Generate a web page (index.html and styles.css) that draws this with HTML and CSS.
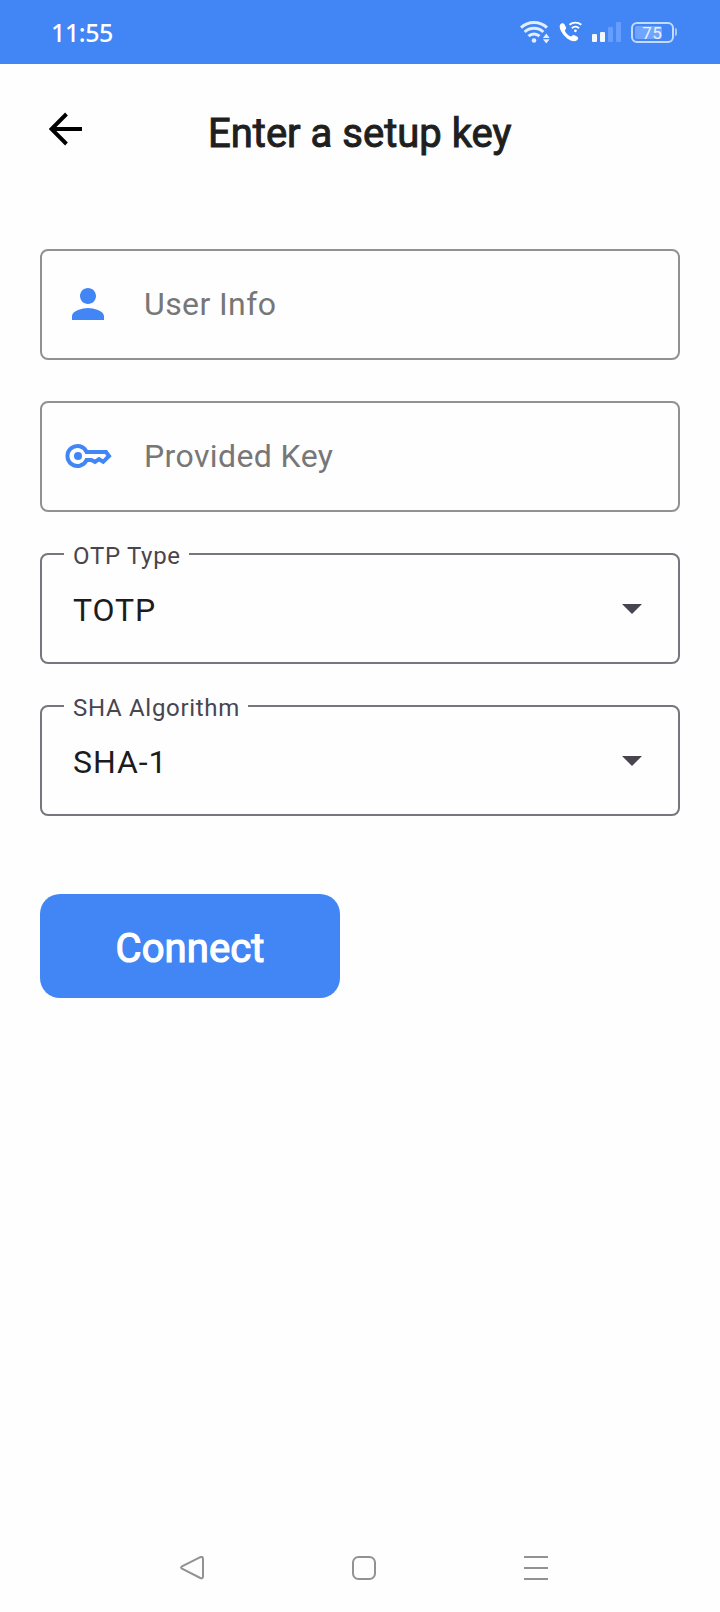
FILE: index.html
```html
<!DOCTYPE html>
<html lang="en">
<head>
<meta charset="utf-8">
<title>Enter a setup key</title>
<link rel="stylesheet" href="styles.css">
</head>
<body>
<div class="screen">
  <header class="status">
    <span class="clock">11:55</span>
    <div class="status-icons">
      <svg class="wifi" width="30" height="24" viewBox="0 0 30 24">
        <g fill="none" stroke="#e2edff" stroke-width="3">
          <path d="M1 7.6A19 19 0 0 1 27 7.6"/>
          <path d="M4.7 12A13.5 13.5 0 0 1 23.3 12"/>
          <path d="M8.5 16.2A8 8 0 0 1 19.5 16.2"/>
        </g>
        <circle cx="14" cy="20.5" r="2.3" fill="#e2edff"/>
        <path d="M26.3 13.5L29.7 18H22.9zM26.3 23.5L29.7 19.2H22.9z" fill="#e2edff"/>
      </svg>
      <svg class="call" width="24" height="22" viewBox="0 0 24 22">
        <path d="M1.2 3.5C2.5 1.8 4.4 1.8 5.2 3L7 6.3C7.6 7.6 6 8.6 5.8 9.5C6.5 12 9 14.6 11.8 15.5C12.9 15.2 13.6 13.6 15 14L18.4 15.8C19.7 16.6 19.4 18.2 18 19.3C15.6 21.2 11.4 20 8.2 17.5C3.4 13.6-.8 7 1.2 3.5Z" fill="#fff"/>
        <g fill="none" stroke="#fff" stroke-width="1.9"><path d="M10.5 3.8A9 9 0 0 1 22.3 3.8M12.9 7.2A5.2 5.2 0 0 1 20 7.2"/></g>
        <circle cx="16.4" cy="9.8" r="1.4" fill="#fff"/>
      </svg>
      <svg class="signal" width="30" height="20" viewBox="0 0 30 20">
        <rect x="0" y="12" width="5" height="8" rx="1" fill="#f3f8ff"/>
        <rect x="8" y="10" width="5" height="10" rx="1" fill="#f3f8ff"/>
        <rect x="16" y="5" width="5" height="15" rx="1" fill="#659eff"/>
        <rect x="24" y="0" width="5" height="20" rx="1" fill="#659eff"/>
      </svg>
      <div class="battery"><span class="charge">75</span></div>
      <span class="battery-tip"></span>
    </div>
  </header>
  <div class="appbar">
    <svg class="back" width="34" height="34" viewBox="0 0 34 34"><path d="M33 17H3M17.5 2L2.5 17L17.5 32" fill="none" stroke="#000" stroke-width="3.9"/></svg>
    <h1 class="title">Enter a setup key</h1>
  </div>
  <main class="form">
    <div class="field">
      <span class="lead"><svg width="48" height="48" viewBox="0 0 24 24"><path fill="#4285f4" d="M12 12c2.21 0 4-1.79 4-4s-1.79-4-4-4-4 1.79-4 4 1.79 4 4 4zm0 2c-2.67 0-8 1.34-8 4v2h16v-2c0-2.66-5.33-4-8-4z"/></svg></span>
      <span class="hint">User Info</span>
    </div>
    <div class="field">
      <span class="lead"><svg width="48" height="48" viewBox="0 0 48 48">
        <path d="M22.6 20H42L45 24L39.2 29.8L35 27.2L31 30L27.4 28H22.6A10 10 0 1 1 22.6 20Z" fill="none" stroke="#4285f4" stroke-width="4"/>
        <circle cx="14" cy="24" r="4" fill="#4285f4"/></svg></span>
      <span class="hint key-hint">Provided Key</span>
    </div>
    <div class="field select">
      <span class="label">OTP Type</span>
      <span class="value">TOTP</span>
      <svg class="caret" width="20" height="10" viewBox="0 0 20 10"><path d="M0 0H20L10 10Z" fill="#49454f"/></svg>
    </div>
    <div class="field select">
      <span class="label">SHA Algorithm</span>
      <span class="value">SHA-1</span>
      <svg class="caret" width="20" height="10" viewBox="0 0 20 10"><path d="M0 0H20L10 10Z" fill="#49454f"/></svg>
    </div>
    <button class="connect">Connect</button>
  </main>
  <nav class="navbar">
    <svg width="24" height="24" viewBox="0 0 24 24"><path d="M20.3 1.2L2 10.4Q.2 11.5 2 12.7L20.3 22Q23 23 23 20.5V2.7Q23 .2 20.3 1.2Z"/></svg>
    <svg width="24" height="24" viewBox="0 0 24 24"><rect x="1" y="1" width="22" height="22" rx="5.5"/></svg>
    <svg width="24" height="24" viewBox="0 0 24 24"><path d="M0 1H24M0 12H24M0 23H24"/></svg>
  </nav>
</div>
</body>
</html>
```
FILE: styles.css
```css
body { margin: 0; background: #fefefe; font-family: Roboto, sans-serif; }
.screen { width: 720px; height: 1612px; display: flex; flex-direction: column; overflow: hidden; }
.status { height: 64px; box-sizing: border-box; padding: 0 43px 0 51px; background: #4285f4; display: flex; align-items: center; justify-content: space-between; }
.clock { color: #fff; font-family: "Noto Sans", sans-serif; font-size: 25px; font-weight: 500; line-height: 30px; letter-spacing: -0.4px; }
.status-icons { display: flex; align-items: center; }
.wifi { margin-right: 9px; }
.call { margin-right: 9px; }
.signal { margin-right: 9px; }
.battery { width: 43px; height: 21px; box-sizing: border-box; border: 2px solid #c4dbff; border-radius: 6px; padding: 2px; display: flex; }
.charge { width: 27px; background: #6fa4ff; color: #eaf2ff; font-size: 17px; font-weight: 400; line-height: 14px; text-align: right; letter-spacing: 0.3px; border-radius: 2px; }
.battery-tip { width: 2px; height: 8px; margin-left: 1px; background: #a9caff; border-radius: 0 2px 2px 0; }
.appbar { height: 185px; box-sizing: border-box; padding: 48px 48px 0 49px; display: flex; align-items: flex-start; }
.back { margin-right: 125px; }
.title { margin: -2px 0 0; font-size: 40px; line-height: 48px; font-weight: 400; color: #1f1f1f; -webkit-text-stroke: 1px #1f1f1f; white-space: nowrap; }
.form { padding: 0 40px; display: flex; flex-direction: column; gap: 41px; flex: 1; }
.field { position: relative; height: 111px; box-sizing: border-box; border: 2px solid #919191; border-radius: 8px; display: flex; align-items: center; padding-bottom: 2px; }
.lead { width: 48px; height: 48px; margin-left: 22px; }
.hint { margin-left: 32px; font-size: 32px; letter-spacing: 0.4px; color: #777; }
.select { border-color: #79747e; justify-content: space-between; padding: 0 36px 0 31px; }
.label { position: absolute; left: 22px; top: -13px; padding: 0 8px 0 9px; background: #fefefe; font-size: 24px; line-height: 28px; letter-spacing: 0.7px; color: #49454f; }
.value { padding-top: 2px; font-size: 32px; letter-spacing: 0.9px; color: #1c1b1f; }
.connect { width: 300px; height: 104px; margin-top: 37px; padding: 5px 0 0; border: 0; border-radius: 20px; background: #4285f4; color: #fff; font: 400 40px/48px Roboto, sans-serif; letter-spacing: 0.1px; -webkit-text-stroke: 1.2px #fff; }
.navbar { display: flex; gap: 148px; padding: 0 0 32px 180px; fill: none; stroke: #929292; stroke-width: 2; }
```
